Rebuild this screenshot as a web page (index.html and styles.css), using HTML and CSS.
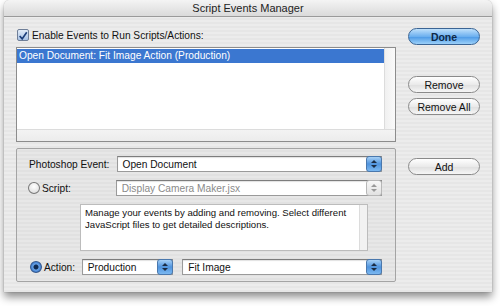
FILE: index.html
```html
<!DOCTYPE html>
<html lang="en">
  <head>
    <meta charset="UTF-8" />
    <title>Script Events Manager</title>
    <link rel="stylesheet" href="styles.css">
  </head>
  <body>
    <div class="window">
      <div class="titlebar">Script Events Manager</div>
      <div class="content">
        <div class="main">
          <label class="check-row">
            <span class="checkbox">
              <svg width="12" height="12" viewBox="0 0 12 12">
                <path d="M2 6 L5 9.5 L10.5 1.5" fill="none" stroke="#1d3f7a" stroke-width="2" />
              </svg>
            </span>
            Enable Events to Run Scripts/Actions:
          </label>

          <div class="listbox">
            <div class="list-area">
              <div class="list-item selected">Open Document: Fit Image Action (Production)</div>
            </div>
            <div class="vscroll"></div>
            <div class="hscroll"></div>
          </div>

          <div class="group">
            <div class="row">
              <span class="label event-label">Photoshop Event:</span>
              <div class="select wide">
                <span>Open Document</span>
                <span class="arrows blue"></span>
              </div>
            </div>
            <div class="row">
              <span class="radio"></span>
              <span class="label script-label">Script:</span>
              <div class="select wide disabled">
                <span>Display Camera Maker.jsx</span>
                <span class="arrows gray"></span>
              </div>
            </div>
            <div class="desc">
              <div class="desc-text">Manage your events by adding and removing. Select different<br>JavaScript files to get detailed descriptions.</div>
              <div class="desc-scroll"></div>
            </div>
            <div class="row">
              <span class="radio on"></span>
              <span class="label action-label">Action:</span>
              <div class="select set">
                <span>Production</span>
                <span class="arrows blue"></span>
              </div>
              <div class="select action">
                <span>Fit Image</span>
                <span class="arrows blue"></span>
              </div>
            </div>
          </div>
        </div>

        <div class="side">
          <button class="btn default">Done</button>
          <button class="btn remove">Remove</button>
          <button class="btn">Remove All</button>
          <button class="btn add">Add</button>
        </div>
      </div>
    </div>
  </body>
</html>
```

FILE: styles.css
```css
* {
  margin: 0;
  padding: 0;
  box-sizing: border-box;
}

body {
  background: #fff;
  font-family: "Liberation Sans", Arial, sans-serif;
  font-size: 10.2px;
  color: #111;
  width: 500px;
  height: 306px;
  overflow: hidden;
}

.window {
  margin-left: 4px;
  width: 488px;
  height: 292px;
  border-radius: 6px 6px 0 0;
  background: repeating-linear-gradient(
    to bottom,
    #ececec 0px,
    #ececec 2px,
    #e6e6e6 2px,
    #e6e6e6 4px
  );
  box-shadow: 0 5px 8px rgba(0, 0, 0, 0.45), 0 0 1px rgba(0, 0, 0, 0.5);
}

.titlebar {
  height: 17px;
  border-radius: 6px 6px 0 0;
  background: linear-gradient(#f4f4f4, #dadada);
  border-bottom: 1px solid #9a9a9a;
  text-align: center;
  line-height: 17px;
  font-size: 11px;
  color: #222;
}

.content {
  display: flex;
  padding-left: 12px;
}

.main {
  width: 380px;
}

/* Checkbox row */
.check-row {
  display: flex;
  align-items: center;
  gap: 3px;
  margin-top: 11px;
  height: 14px;
  padding-left: 1px;
  white-space: nowrap;
}

.checkbox {
  width: 12px;
  height: 12px;
  border: 1px solid #6f7f98;
  border-radius: 2px;
  background: linear-gradient(#e2ecf8, #a9c3e6);
  display: flex;
}

/* Event list */
.listbox {
  position: relative;
  margin-top: 5px;
  height: 95px;
  border: 1px solid #8c8c8c;
  background: #fff;
}

.list-area {
  padding-top: 1px;
  margin-right: 11px;
}

.list-item {
  height: 14px;
  line-height: 14px;
  padding-left: 2px;
}

.list-item.selected {
  background: #3b77d0;
  color: #fff;
}

.vscroll {
  position: absolute;
  top: 0;
  right: 0;
  width: 11px;
  height: 82px;
  border-left: 1px solid #dcdcdc;
  background: linear-gradient(to right, #f0f0f0, #fafafa);
}

.hscroll {
  position: absolute;
  left: 0;
  right: 0;
  bottom: 0;
  height: 12px;
  border-top: 1px solid #dcdcdc;
  background: linear-gradient(#f3f3f3, #ececec);
}

/* Lower group box */
.group {
  margin-top: 6px;
  height: 134px;
  border: 1px solid #a4a4a4;
  border-radius: 2px;
  background: rgba(0, 0, 0, 0.02);
  padding: 7px 13px 0 11px;
}

.row {
  display: flex;
  align-items: center;
  height: 16px;
  white-space: nowrap;
}

.row + .row {
  margin-top: 8px;
}

.label {
  color: #111;
}

.event-label {
  width: 89px;
  padding-left: 1px;
}

.script-label {
  width: 76px;
  padding-left: 2px;
}

.action-label {
  width: 40px;
  padding-left: 2px;
}

.radio {
  width: 12px;
  height: 12px;
  border-radius: 50%;
  border: 1px solid #777;
  background: radial-gradient(circle at 50% 35%, #fff, #d8d8d8);
}

.radio.on {
  margin-left: 2px;
  border-color: #35588c;
  background: radial-gradient(circle, #102a50 0, #102a50 2px, #6aa3e6 3px, #2c6cc4 6px);
}

.select {
  display: flex;
  align-items: center;
  justify-content: space-between;
  height: 16px;
  border: 1px solid #9a9a9a;
  border-top-color: #7d7d7d;
  background: #fff;
  padding-left: 5px;
  box-shadow: inset 0 1px 1px rgba(0, 0, 0, 0.12);
}

.select.wide {
  width: 267px;
}

.select.disabled {
  color: #8a8a8a;
}

.select.set {
  width: 92px;
}

.select.action {
  width: 201px;
  margin-left: 9px;
}

.arrows {
  position: relative;
  width: 16px;
  height: 16px;
  margin-right: -1px;
  border-radius: 3px;
}

.arrows.blue {
  background: linear-gradient(#a6d0f6, #4f93dd 50%, #7bb8f1);
  border: 1px solid #4a78ad;
}

.arrows.gray {
  background: linear-gradient(#f7f7f7, #e2e2e2);
  border: 1px solid #b7b7b7;
}

.arrows::before,
.arrows::after {
  content: "";
  position: absolute;
  left: 4px;
  border-left: 3px solid transparent;
  border-right: 3px solid transparent;
}

.arrows::before {
  top: 3px;
  border-bottom: 3px solid #1b2c44;
}

.arrows::after {
  bottom: 3px;
  border-top: 3px solid #1b2c44;
}

.arrows.gray::before {
  border-bottom-color: #999;
}

.arrows.gray::after {
  border-top-color: #999;
}

.desc {
  display: flex;
  margin: 8px 0 8px 52px;
  width: 288px;
  height: 47px;
  border: 1px solid #bcbcbc;
  background: #fff;
}

.desc-text {
  flex: 1;
  padding: 2px 3px 2px 4px;
  font-size: 9.6px;
  line-height: 12px;
  white-space: nowrap;
  overflow: hidden;
}

.desc-scroll {
  width: 8px;
  border-left: 1px solid #dcdcdc;
  background: #f2f2f2;
}

/* Buttons */
.side {
  display: flex;
  flex-direction: column;
  margin-left: 12px;
  padding-top: 11px;
}

.btn {
  width: 72px;
  height: 17px;
  border: 1px solid #8a8a8a;
  border-radius: 9px;
  background: linear-gradient(#ffffff, #eaeaea 50%, #dedede 51%, #f6f6f6);
  font-family: "Liberation Sans", Arial, sans-serif;
  font-size: 10.5px;
  color: #111;
  margin-bottom: 5px;
}

.btn.default {
  border-color: #3a6494;
  background: linear-gradient(#bfe0fb, #6cb0ef 50%, #4a98e6 51%, #9bd0f9);
  color: #0e2848;
  font-weight: bold;
}

.btn.remove {
  margin-top: 26px;
}

.btn.add {
  margin-top: 38px;
}
```
